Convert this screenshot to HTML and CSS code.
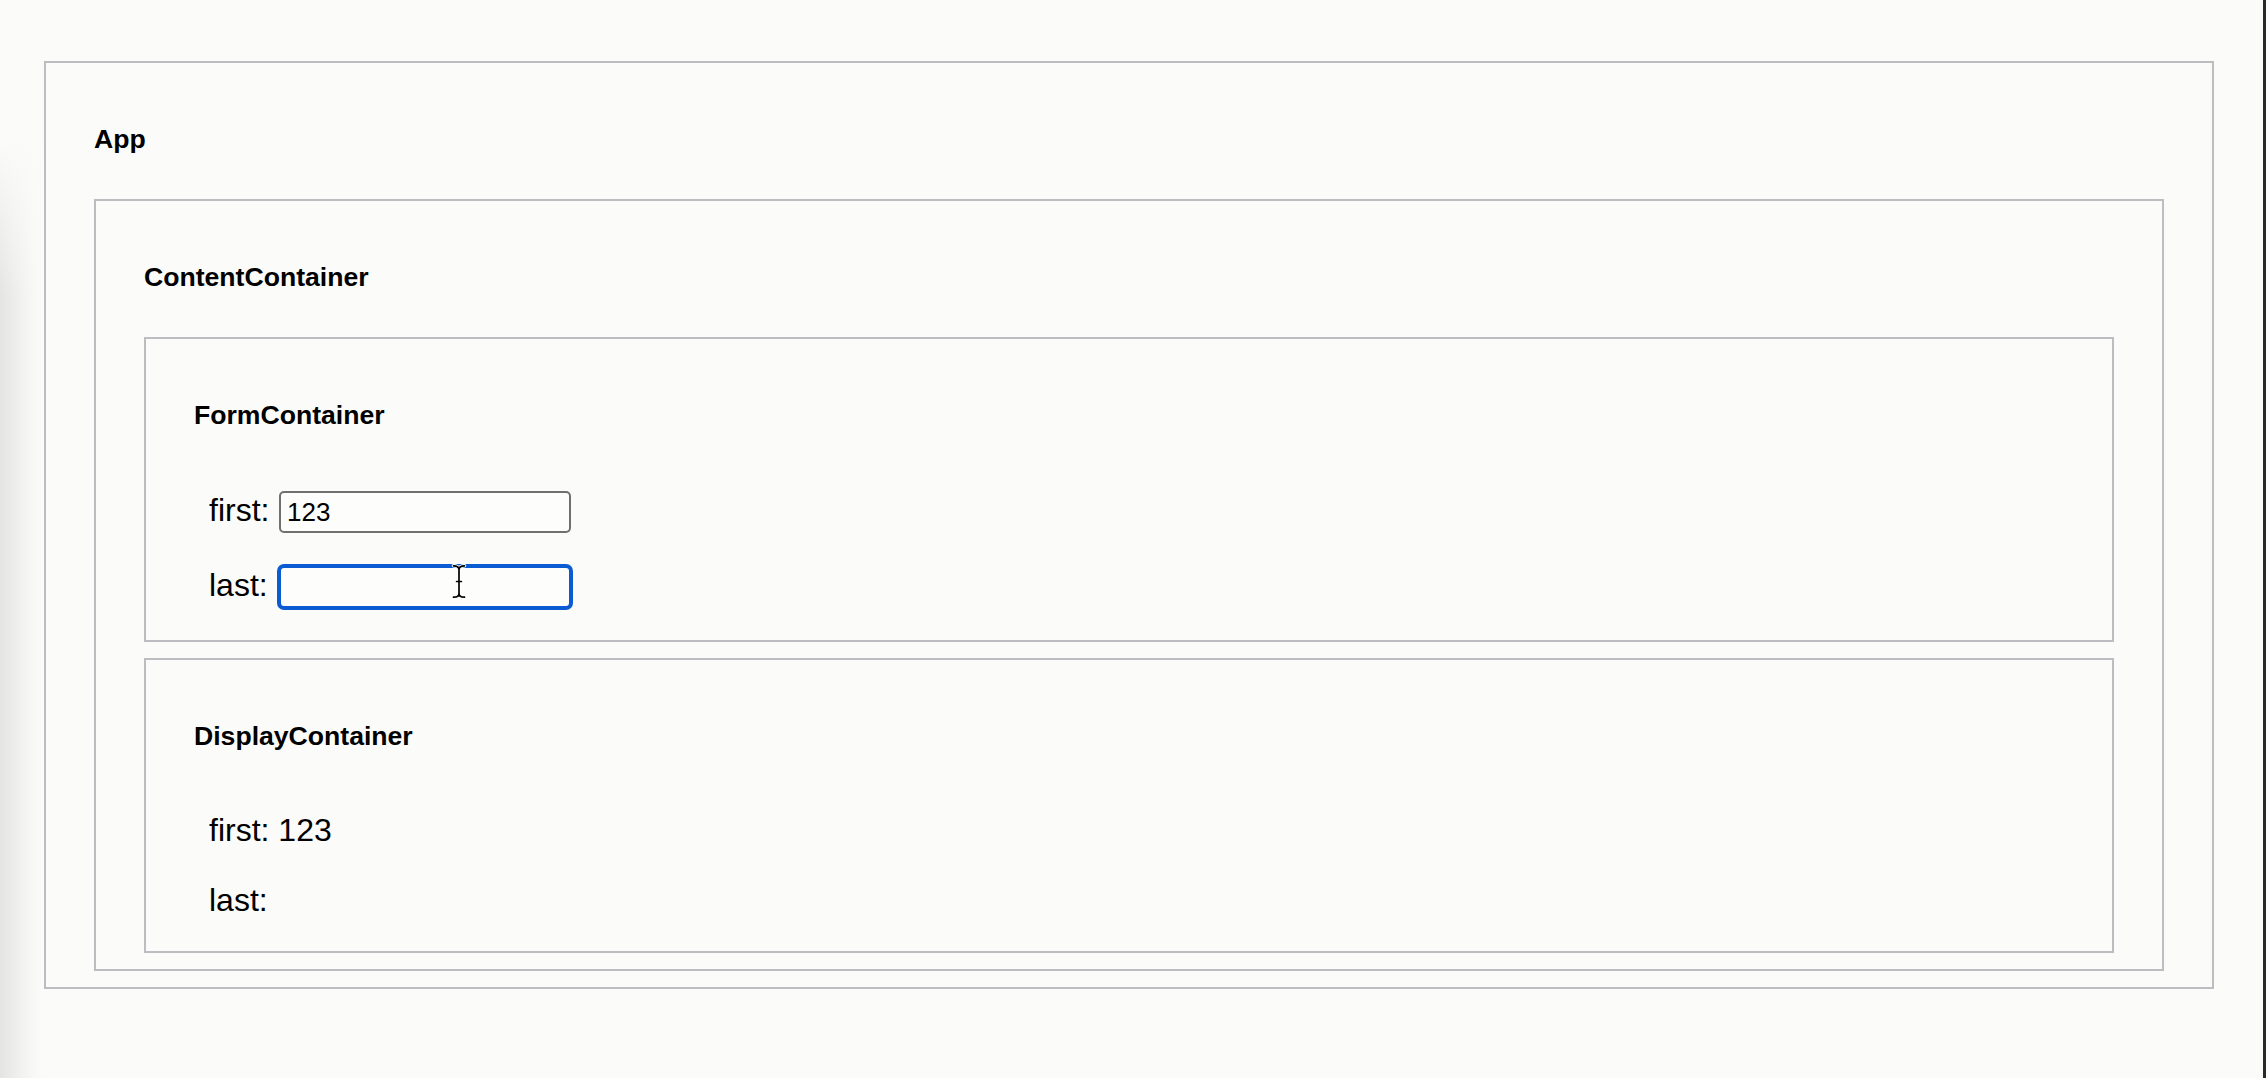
FILE: index.html
```html
<!DOCTYPE html>
<html lang="en">
<head>
<meta charset="utf-8">
<title>App</title>
<link rel="stylesheet" href="styles.css">
</head>
<body>
<div class="page">
  <section class="box">
    <h5 class="title">App</h5>
    <section class="box">
      <h5 class="title">ContentContainer</h5>
      <section class="box">
        <h5 class="title">FormContainer</h5>
        <div class="rows form-rows">
          <div class="row">
            <label class="label" for="first">first:</label>
            <input id="first" class="field" type="text" value="123">
          </div>
          <div class="row">
            <label class="label" for="last">last:</label>
            <span class="field-wrap">
              <input id="last" class="field field-focus" type="text" value="">
              <svg class="ibeam" width="16" height="35" viewBox="0 0 16 35" aria-hidden="true">
                <g fill="none" stroke="#ffffff" stroke-width="3.6" stroke-linecap="round">
                  <path d="M2.5 1.8 C5.5 1.8 8 3.2 8 5.6 C8 3.2 10.5 1.8 13.5 1.8"/>
                  <path d="M8 5.6 V29.4"/>
                  <path d="M2.5 33.2 C5.5 33.2 8 31.8 8 29.4 C8 31.8 10.5 33.2 13.5 33.2"/>
                  <path d="M5.6 17.5 H10.4"/>
                </g>
                <g fill="none" stroke="#000000" stroke-width="1.7" stroke-linecap="round">
                  <path d="M2.5 1.8 C5.5 1.8 8 3.2 8 5.6 C8 3.2 10.5 1.8 13.5 1.8"/>
                  <path d="M8 5.6 V29.4"/>
                  <path d="M2.5 33.2 C5.5 33.2 8 31.8 8 29.4 C8 31.8 10.5 33.2 13.5 33.2"/>
                  <path d="M5.6 17.5 H10.4"/>
                </g>
              </svg>
            </span>
          </div>
        </div>
      </section>
      <section class="box">
        <h5 class="title">DisplayContainer</h5>
        <div class="rows display-rows">
          <div class="line">first: 123</div>
          <div class="line">last:</div>
        </div>
      </section>
    </section>
  </section>
</div>
</body>
</html>
```

FILE: styles.css
```css
* {
  box-sizing: border-box;
}

html,
body {
  margin: 0;
  height: 100%;
}

body {
  background-color: #fbfbf9;
  background-image:
    linear-gradient(to bottom, #fbfbf9 0, rgba(251, 251, 249, 0) 160px),
    linear-gradient(to right, #e4e4e3 0, #eeeeed 16px, #f6f6f4 30px, #fbfbf9 42px);
  background-repeat: no-repeat, no-repeat;
  background-size: 42px 1100px, 42px 1100px;
  background-position: 0 140px, 0 140px;
  border-right: 3px solid #2a2a2a;
  font-family: "Liberation Sans", Arial, sans-serif;
  color: #000;
}

.page {
  padding: 61px 49px 0 44px;
}

.box {
  border: 2px solid #bcbcc1;
  padding: 0 48px 16px;
  display: flex;
  flex-direction: column;
  gap: 16px;
}

.title {
  font-size: 26.6px;
  font-weight: bold;
  line-height: 30px;
  margin: 61px 0 29px;
}

.rows {
  display: flex;
  flex-direction: column;
  padding: 16px 15px;
}

.form-rows {
  gap: 33px;
}

.display-rows {
  gap: 32.5px;
}

.row {
  display: flex;
  align-items: baseline;
}

.label {
  flex: none;
  width: 70px;
  font-size: 32px;
}

.field-wrap {
  position: relative;
  display: flex;
}

.field {
  width: 292px;
  height: 42px;
  margin: 0;
  padding: 0 6px;
  border: 2px solid #707070;
  border-radius: 5px;
  background: #fdfdfc;
  color: #000;
  font-family: "Liberation Sans", Arial, sans-serif;
  font-size: 26px;
  outline: none;
}

.field-focus {
  border-color: #0b5bd2;
  box-shadow: 0 0 0 2px #0b5bd2;
}

.ibeam {
  position: absolute;
  left: 172px;
  top: -2px;
}

.line {
  font-size: 32px;
}
```
